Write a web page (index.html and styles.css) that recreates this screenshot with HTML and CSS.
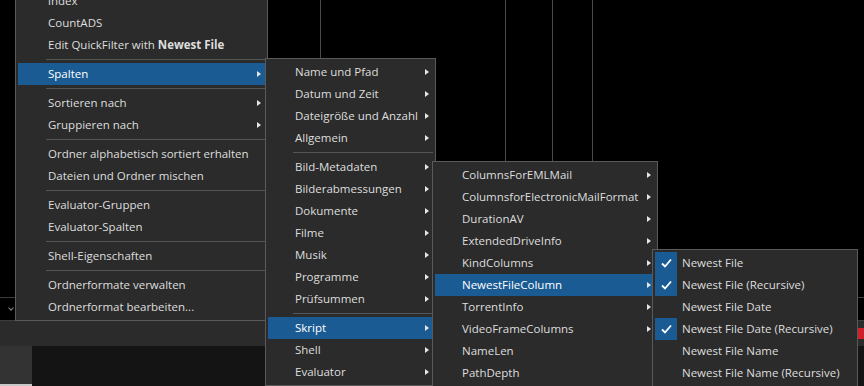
FILE: index.html
```html
<!DOCTYPE html>
<html>
<head>
    <title>Spalten</title>
    <link rel="stylesheet" href="styles.css">
</head>
<body>
<div class="screen">
    <div class="list">
        <div class="col c1"></div>
        <div class="col c2"></div>
        <div class="col c3"></div>
        <div class="col c4"></div>
        <div class="col c5"></div>
    </div>
    <div class="combo-row">
        <div class="combo"><span class="chev"></span></div>
    </div>
    <div class="statusbar"><div class="red"></div></div>
    <div class="bottom">
        <div class="side"></div>
        <div class="pane"></div>
    </div>

    <!-- Hauptmenü -->
    <div class="menu m1">
        <div class="item">index</div>
        <div class="item">CountADS</div>
        <div class="item">Edit QuickFilter with&nbsp;<b>Newest File</b></div>
        <div class="sep"></div>
        <div class="item active sub">Spalten</div>
        <div class="sep"></div>
        <div class="item sub">Sortieren nach</div>
        <div class="item sub">Gruppieren nach</div>
        <div class="sep"></div>
        <div class="item">Ordner alphabetisch sortiert erhalten</div>
        <div class="item">Dateien und Ordner mischen</div>
        <div class="sep"></div>
        <div class="item">Evaluator-Gruppen</div>
        <div class="item">Evaluator-Spalten</div>
        <div class="sep"></div>
        <div class="item">Shell-Eigenschaften</div>
        <div class="sep"></div>
        <div class="item">Ordnerformate verwalten</div>
        <div class="item">Ordnerformat bearbeiten...</div>
    </div>

    <!-- Spalten -->
    <div class="menu m2">
        <div class="item sub">Name und Pfad</div>
        <div class="item sub">Datum und Zeit</div>
        <div class="item sub">Dateigröße und Anzahl</div>
        <div class="item sub">Allgemein</div>
        <div class="sep"></div>
        <div class="item sub">Bild-Metadaten</div>
        <div class="item sub">Bilderabmessungen</div>
        <div class="item sub">Dokumente</div>
        <div class="item sub">Filme</div>
        <div class="item sub">Musik</div>
        <div class="item sub">Programme</div>
        <div class="item sub">Prüfsummen</div>
        <div class="sep"></div>
        <div class="item active sub">Skript</div>
        <div class="item sub">Shell</div>
        <div class="item sub">Evaluator</div>
    </div>

    <!-- Skript -->
    <div class="menu m3">
        <div class="item sub">ColumnsForEMLMail</div>
        <div class="item sub">ColumnsforElectronicMailFormat</div>
        <div class="item sub">DurationAV</div>
        <div class="item sub">ExtendedDriveInfo</div>
        <div class="item sub">KindColumns</div>
        <div class="item active sub">NewestFileColumn</div>
        <div class="item sub">TorrentInfo</div>
        <div class="item sub">VideoFrameColumns</div>
        <div class="item">NameLen</div>
        <div class="item">PathDepth</div>
    </div>

    <!-- NewestFileColumn -->
    <div class="menu m4">
        <div class="item checked">Newest File</div>
        <div class="item checked">Newest File (Recursive)</div>
        <div class="item">Newest File Date</div>
        <div class="item checked">Newest File Date (Recursive)</div>
        <div class="item">Newest File Name</div>
        <div class="item">Newest File Name (Recursive)</div>
    </div>
</div>
</body>
</html>
```

FILE: styles.css
```css
body {
    margin: 0;
    background-color: #000;
    font-family: "Open Sans", "Noto Sans", sans-serif;
    font-size: 11.5px;
}

.screen {
    position: relative;
    width: 864px;
    height: 386px;
    overflow: hidden;
    background-color: #000;
    display: flex;
    flex-direction: column;
}

/* Hintergrund: Dateiliste */
.list {
    height: 297px;
    display: flex;
}

.col {
    border-left: 1px solid #4a4a4a;
}

.c1 {
    width: 320px;
    border-left: none;
}

.c2 {
    width: 184px;
}

.c3 {
    width: 46px;
}

.c4 {
    width: 39px;
}

.c5 {
    flex: 1;
}

.combo-row {
    height: 22px;
    border-top: 1px solid #3c3c3c;
    display: flex;
}

.combo {
    width: 15px;
    position: relative;
}

.chev {
    position: absolute;
    left: 9px;
    top: 8px;
    width: 3px;
    height: 3px;
    border-right: 1px solid #888;
    border-bottom: 1px solid #888;
    transform: rotate(45deg);
}

.statusbar {
    height: 25px;
    background-color: #2b2b2b;
    border-top: 1px solid #3c3c3c;
    display: flex;
    justify-content: flex-end;
    align-items: center;
}

.red {
    width: 8px;
    height: 11px;
    background-color: #d0202a;
}

.bottom {
    flex: 1;
    display: flex;
}

.side {
    width: 32px;
    background-color: #333;
    border-bottom: 2px solid #c8c8c8;
}

.pane {
    flex: 1;
    background-color: #141414;
}

/* Kontextmenüs */
.menu {
    position: absolute;
    box-sizing: border-box;
    background-color: #2b2b2b;
    border: 1px solid #5a5a5a;
    padding: 2px;
    color: #dedede;
}

.m1 {
    left: 15px;
    top: -13px;
    width: 253px;
}

.m2 {
    left: 265px;
    top: 58px;
    width: 171px;
}

.m3 {
    left: 432px;
    top: 161px;
    width: 226px;
}

.m4 {
    left: 652px;
    top: 249px;
    width: 206px;
}

.item {
    position: relative;
    height: 22px;
    line-height: 22px;
    padding-left: 27px;
    white-space: nowrap;
}

.m1 .item {
    padding-left: 30px;
}

.item b {
    font-weight: 700;
}

.item.active {
    background-color: #1b5b93;
    color: #fff;
}

.item.sub::after {
    content: "";
    position: absolute;
    right: 4px;
    top: 8px;
    border-left: 4px solid #e6e6e6;
    border-top: 3.5px solid transparent;
    border-bottom: 3.5px solid transparent;
}

.item.checked::before {
    content: "";
    position: absolute;
    left: 0;
    top: 0;
    width: 22px;
    height: 22px;
    background-color: #1b5b93;
    background-image: url("data:image/svg+xml;utf8,<svg xmlns='http://www.w3.org/2000/svg' width='22' height='22'><polyline points='7,11.5 10,14.5 16,7.5' fill='none' stroke='white' stroke-width='1.8'/></svg>");
}

.sep {
    height: 1px;
    margin: 3px 0 3px 25px;
    background-color: #555;
}

.m1 .sep {
    margin-left: 28px;
}
```
